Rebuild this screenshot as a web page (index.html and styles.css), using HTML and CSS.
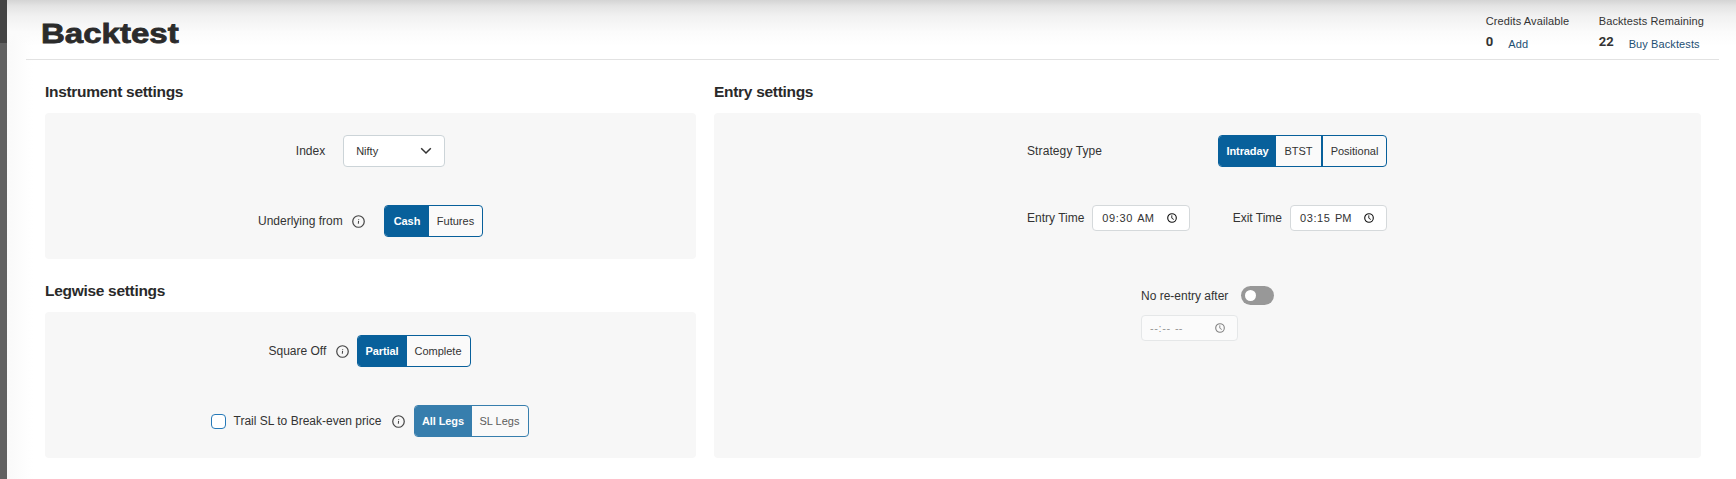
FILE: index.html
```html
<!DOCTYPE html>
<html lang="en">
<head>
<meta charset="utf-8">
<title>Backtest</title>
<link rel="stylesheet" href="styles.css">
</head>
<body>
<svg class="defs" width="0" height="0" aria-hidden="true">
  <symbol id="info" viewBox="0 0 14 14"><circle cx="7" cy="7" r="6.2" fill="none" stroke="currentColor" stroke-width="1.3"/><path d="M7.2 4.6v.9M7.1 6.3 6.8 9.4" fill="none" stroke="currentColor" stroke-width="1.1"/></symbol>
  <symbol id="clock" viewBox="0 0 10 10"><circle cx="5" cy="5" r="4.3" fill="none" stroke="currentColor" stroke-width="1.1"/><path d="M4.8 2.3v2.9l2 1.3" fill="none" stroke="currentColor" stroke-width=".9"/></symbol>
</svg>
<div class="app">
  <aside class="rail"></aside>
  <main class="page">
    <header class="header">
      <h1 class="title">Backtest</h1>
      <div class="stats">
        <div class="stat stat-credits"><div class="stat-label">Credits Available</div><div class="stat-row"><b>0</b><a>Add</a></div></div>
        <div class="stat"><div class="stat-label">Backtests Remaining</div><div class="stat-row"><b>22</b><a>Buy Backtests</a></div></div>
      </div>
    </header>
    <div class="columns">
      <div class="column-left">
        <section>
          <h2 class="heading">Instrument settings</h2>
          <div class="panel">
            <div class="row row-index"><span>Index</span>
              <div class="select"><span>Nifty</span><svg width="12" height="8" viewBox="0 0 12 8"><path d="M1.2 1.2 6 6l4.8-4.8" fill="none" stroke="#333" stroke-width="1.5"/></svg></div>
            </div>
            <div class="row"><span class="label-underlying">Underlying from</span><svg class="info info-wide"><use href="#info"/></svg>
              <div class="segments seg-cash"><span class="on">Cash</span><span>Futures</span></div>
            </div>
          </div>
        </section>
        <section>
          <h2 class="heading">Legwise settings</h2>
          <div class="panel panel-legs">
            <div class="row"><span class="label-square">Square Off</span><svg class="info"><use href="#info"/></svg>
              <div class="segments seg-square"><span class="on">Partial</span><span>Complete</span></div>
            </div>
            <div class="row"><i class="checkbox"></i><span class="label-trail">Trail SL to Break-even price</span><svg class="info info-trail"><use href="#info"/></svg>
              <div class="segments seg-legs"><span class="on">All Legs</span><span>SL Legs</span></div>
            </div>
          </div>
        </section>
      </div>
      <section class="column-right">
        <h2 class="heading">Entry settings</h2>
        <div class="panel panel-entry">
          <div class="entry">
            <div class="row spread"><span class="label-strategy">Strategy Type</span>
              <div class="segments seg-strategy"><span class="on">Intraday</span><span>BTST</span><span>Positional</span></div>
            </div>
            <div class="times">
              <div class="field"><span>Entry Time</span><div class="time"><span class="digits">09:30</span><span>AM</span><svg class="clock"><use href="#clock"/></svg></div></div>
              <div class="field"><span>Exit Time</span><div class="time time-exit"><span class="digits">03:15</span><span>PM</span><svg class="clock"><use href="#clock"/></svg></div></div>
            </div>
            <div class="reentry">
              <div class="reentry-row"><span>No re-entry after</span><div class="toggle"><i></i></div></div>
              <div class="time time-off"><span class="digits">--:--</span><span>--</span><svg class="clock"><use href="#clock"/></svg></div>
            </div>
          </div>
        </div>
      </section>
    </div>
  </main>
</div>
</body>
</html>
```
FILE: styles.css
```css
* { box-sizing: border-box; }
body { margin: 0; background: #fff; color: #333; font: 12px/16px "Liberation Sans", Arial, sans-serif; overflow: hidden; }
.defs { position: absolute; }
.app { display: flex; height: 479px; }
.rail { width: 7px; flex: none; background: linear-gradient(#444 43px, #616161 43px); }
.page {
  flex: 1;
  background:
    linear-gradient(#d4d4d4, #e4e4e4 6px, #f1f1f1 16px, #fbfbfb 32px, rgba(255,255,255,0) 46px) 0 0 / 100% 46px no-repeat,
    linear-gradient(90deg, #f9f9f9, #fff 26px);
}
.header { display: flex; justify-content: space-between; height: 60px; margin: 0 17px 0 19px; padding: 0 15px 0 15px; border-bottom: 1px solid #e2e2e2; }
.title { margin: 18px 0 0; font-size: 28px; line-height: 32px; font-weight: 700; color: #2b2b2b; -webkit-text-stroke: .8px #2b2b2b; transform: scaleX(1.18); transform-origin: 0 0; }
.stats { display: flex; padding-top: 13px; font-size: 11px; }
.stat-label { letter-spacing: .1px; }
.stat-credits { width: 113px; }
.stat-row { display: flex; align-items: flex-start; margin-top: 4px; }
.stat-row b { font: 700 13px/17px Roboto, "Liberation Sans", sans-serif; }
.stat-row a { margin: 3px 0 0 15px; line-height: 16px; letter-spacing: .1px; color: #1d4f73; }
.columns { display: grid; grid-template-columns: 651px 987px; column-gap: 18px; margin-left: 38px; }
.heading { height: 53px; margin: 0; padding-top: 23px; font-size: 15.5px; line-height: 17px; letter-spacing: -.3px; font-weight: 700; color: #2a2a2a; }
.panel { display: flex; flex-direction: column; gap: 38px; height: 146px; padding: 22px 0; border-radius: 4px; background: #f7f7f7; }
.panel-legs { padding-top: 23px; }
.panel-legs .row { padding-right: 2px; }
.row { display: flex; align-items: center; justify-content: center; height: 32px; flex: none; white-space: nowrap; }
.row-index { gap: 18px; }
.select { display: flex; align-items: center; justify-content: space-between; width: 102px; height: 32px; padding: 0 12px; border: 1px solid #ccd4d8; border-radius: 4px; background: #fff; font-size: 11px; }
.info { width: 13px; height: 13px; margin: 1px 8px 0 9px; color: #444; }
.info-wide { margin-right: 19px; }
.info-trail { margin-right: 9px; }
.label-underlying { width: 85px; }
.label-square { width: 58px; }
.label-trail { width: 149px; }
.label-strategy { letter-spacing: .1px; }
.segments { display: grid; height: 32px; border: 1px solid #08609b; border-radius: 4px; background: #fafafa; font-size: 11px; line-height: 30px; text-align: center; overflow: hidden; }
.segments .on { background: #08609b; color: #fff; font-weight: 700; letter-spacing: -.1px; }
.seg-cash { grid-template-columns: 44px 53px; }
.seg-square { grid-template-columns: 49px 63px; }
.seg-legs { grid-template-columns: 57px 56px; opacity: .8; }
.seg-strategy { grid-template-columns: 57px 45px 65px; }
.seg-strategy span:last-child { border-left: 2px solid #08609b; }
.checkbox { width: 15px; height: 15px; margin: 0 8px 0 0; border: 1px solid #2679b8; border-radius: 4px; background: #fff; }
.panel-entry { height: 345px; align-items: center; }
.entry { width: 360px; margin-right: 1px; }
.spread { justify-content: space-between; }
.times { display: flex; justify-content: space-between; margin-top: 38px; }
.field { display: flex; align-items: center; gap: 8px; white-space: nowrap; }
.time { display: flex; align-items: center; width: 98px; height: 26px; padding: 0 12px 0 9px; border: 1px solid #d5d9db; border-radius: 4px; background: #fff; font-size: 11px; }
.time-exit { width: 97px; }
.digits { width: 35px; letter-spacing: .6px; }
.clock { width: 10px; height: 10px; margin-left: auto; color: #111; }
.reentry { width: 133px; margin: 55px 0 0 114px; }
.reentry-row { display: flex; justify-content: space-between; align-items: center; height: 19px; white-space: nowrap; }
.toggle { width: 33px; height: 19px; padding: 4px; border-radius: 10px; background: #989898; }
.toggle i { display: block; width: 11px; height: 11px; border-radius: 50%; background: #fff; }
.time-off { width: 97px; margin-top: 10px; padding-left: 8px; opacity: .5; }
.time-off .digits { width: 25px; }
```
